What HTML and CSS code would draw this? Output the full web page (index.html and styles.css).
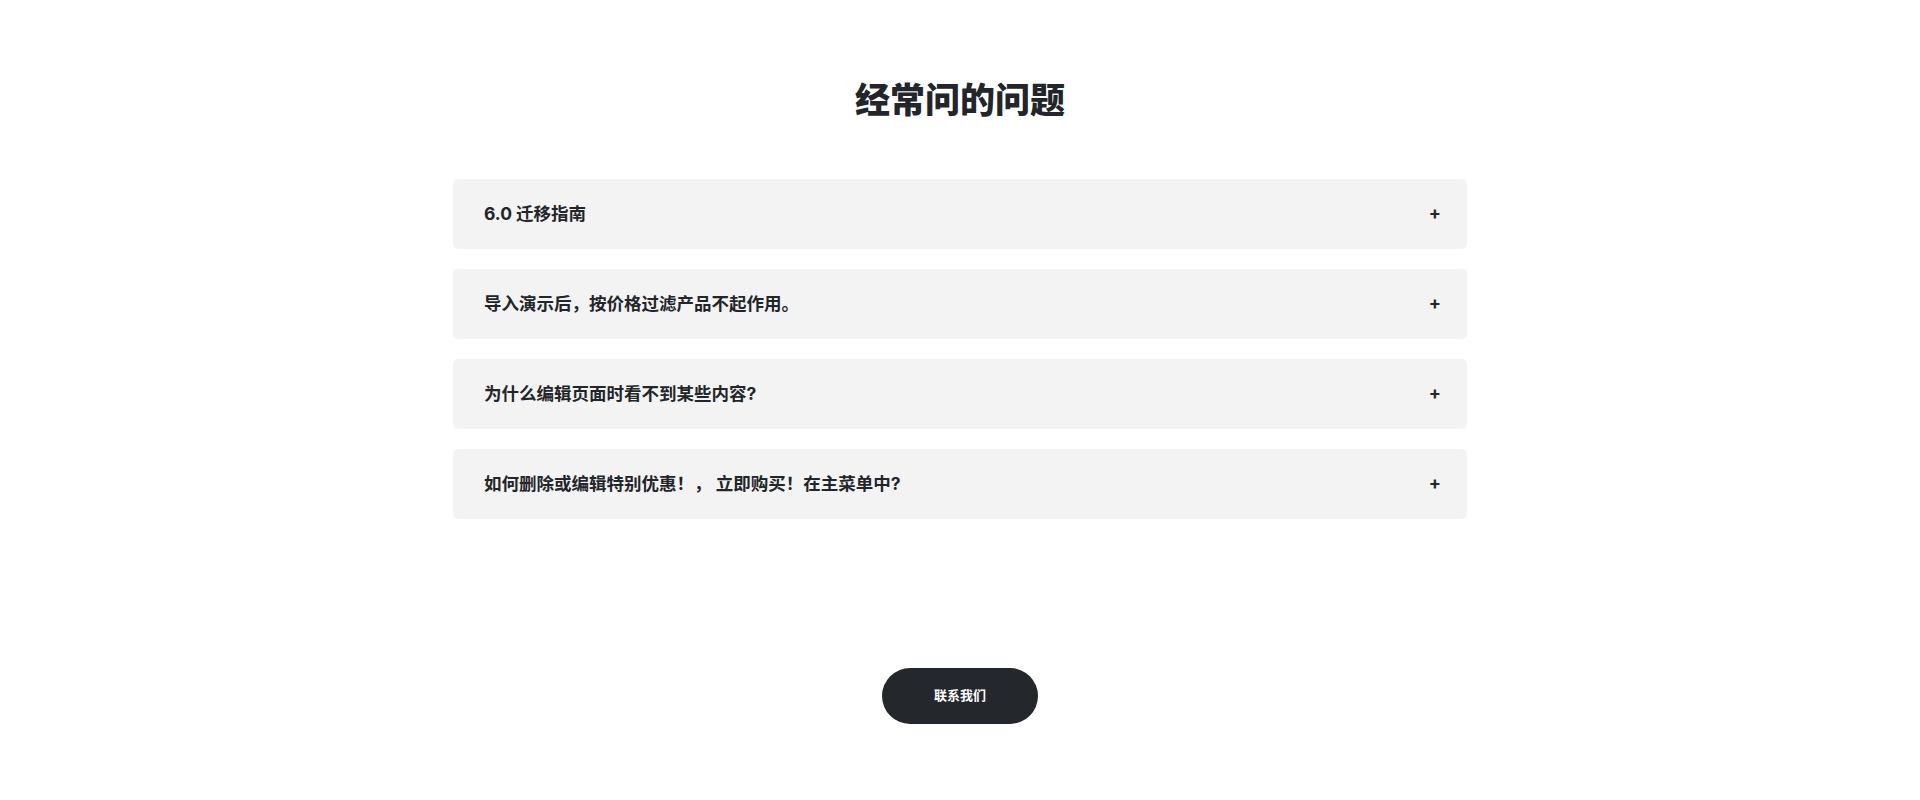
FILE: index.html
```html
<!DOCTYPE html>
<html>
<head>
  <meta charset="UTF-8">
  <title>经常问的问题</title>
  <link rel="stylesheet" href="styles.css">
</head>
<body>
  <section class="faq">
    <h2 class="faq-title">经常问的问题</h2>
    <div class="faq-list">
      <div class="faq-item"><span>6.0 迁移指南</span><span class="plus">+</span></div>
      <div class="faq-item"><span>导入演示后，按价格过滤产品不起作用。</span><span class="plus">+</span></div>
      <div class="faq-item"><span>为什么编辑页面时看不到某些内容?</span><span class="plus">+</span></div>
      <div class="faq-item"><span>如何删除或编辑特别优惠！， 立即购买！在主菜单中?</span><span class="plus">+</span></div>
    </div>
    <a class="contact-btn" href="#">联系我们</a>
  </section>
</body>
</html>
```
FILE: styles.css
```css
body {
  margin: 0;
  font-family: Inter, "Noto Sans CJK SC", sans-serif;
  color: #222529;
  background: #fff;
}
.faq {
  display: flex;
  flex-direction: column;
  align-items: center;
  padding-top: 76px;
}
.faq-title {
  margin: 0;
  font-size: 35px;
  line-height: 48px;
  font-weight: 800;
}
.faq-list {
  width: 1014px;
  margin-top: 55px;
  display: flex;
  flex-direction: column;
  gap: 20px;
}
.faq-item {
  display: flex;
  justify-content: space-between;
  align-items: center;
  box-sizing: border-box;
  height: 70px;
  padding: 0 26px 4px 31px;
  background: #f3f3f3;
  border-radius: 5px;
  font-size: 17.5px;
  font-weight: 700;
}
.plus {
  font-size: 18px;
}
.contact-btn {
  box-sizing: border-box;
  margin-top: 149px;
  width: 156px;
  height: 56px;
  padding-bottom: 3px;
  display: flex;
  align-items: center;
  justify-content: center;
  background: #24272b;
  color: #fff;
  border-radius: 28px;
  font-size: 13px;
  font-weight: 700;
  text-decoration: none;
}
```
